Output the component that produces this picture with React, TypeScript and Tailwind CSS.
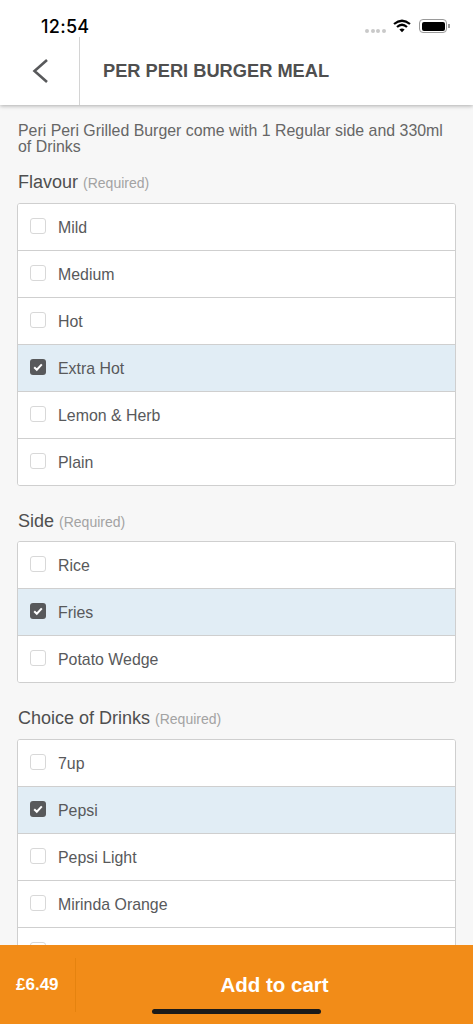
interface Option {
  label: string;
  checked?: boolean;
}

interface Group {
  title: string;
  spacing: string;
  heading: string;
  options: Option[];
}

const groups: Group[] = [
  {
    title: "Flavour",
    spacing: "mt-[14px]",
    heading: "h-[34px]",
    options: [
      { label: "Mild" },
      { label: "Medium" },
      { label: "Hot" },
      { label: "Extra Hot", checked: true },
      { label: "Lemon & Herb" },
      { label: "Plain" },
    ],
  },
  {
    title: "Side",
    spacing: "mt-[22px]",
    heading: "h-[33px]",
    options: [
      { label: "Rice" },
      { label: "Fries", checked: true },
      { label: "Potato Wedge" },
    ],
  },
  {
    title: "Choice of Drinks",
    spacing: "mt-[22px]",
    heading: "h-[34px]",
    options: [
      { label: "7up" },
      { label: "Pepsi", checked: true },
      { label: "Pepsi Light" },
      { label: "Mirinda Orange" },
      { label: "" },
    ],
  },
];

function Checkbox({ checked }: { checked?: boolean }) {
  if (checked) {
    return (
      <div className="w-4 h-4 mt-[-3px] rounded-[3px] bg-[#58595b] flex items-center justify-center shrink-0">
        <svg width="12" height="12" viewBox="0 0 12 12" fill="none">
          <path d="M2.2 6.2 L4.8 8.8 L9.8 3.4" stroke="#fff" strokeWidth="2" />
        </svg>
      </div>
    );
  }
  return <div className="w-4 h-4 mt-[-3px] rounded-[3px] bg-white border border-[#d8d8d8] shrink-0" />;
}

export default function App() {
  return (
    <div className="relative h-[1024px] overflow-hidden flex flex-col bg-[#f7f7f7] font-['Liberation_Sans',Arial,sans-serif]">
      {/* Header */}
      <div className="relative z-10 h-[105px] bg-white shrink-0 shadow-[0_1px_4px_rgba(0,0,0,0.3)]">
        <div className="h-[37px] relative">
          <span className="absolute left-[41px] top-[16px] text-[18px] leading-[21px] tracking-[0.3px] font-['Inter',sans-serif] font-medium text-black">
            12:54
          </span>
          <div className="absolute left-[365px] top-[29px] flex gap-[1.5px]">
            <span className="w-[4px] h-[4px] rounded-full bg-[#c9c9c9]" />
            <span className="w-[4px] h-[4px] rounded-full bg-[#c9c9c9]" />
            <span className="w-[4px] h-[4px] rounded-full bg-[#c9c9c9]" />
            <span className="w-[4px] h-[4px] rounded-full bg-[#c9c9c9]" />
          </div>
          <svg className="absolute left-[393px] top-[19px]" width="18" height="14" viewBox="0 0 18 14" fill="none">
            <path d="M1 5 Q9 -1.5 17 5" stroke="#000" strokeWidth="2.2" />
            <path d="M4 8 Q9 3.5 14 8" stroke="#000" strokeWidth="2.2" />
            <path d="M6.4 10.4 L9 13.2 L11.6 10.4 Q9 8.4 6.4 10.4 Z" fill="#000" />
          </svg>
          <div className="absolute left-[419px] top-[19px] w-[28px] h-[14px] rounded-[4px] border border-[#9a9a9a] p-[1.5px]">
            <div className="w-full h-full rounded-[2px] bg-black" />
          </div>
          <div className="absolute left-[448px] top-[24px] w-[1.5px] h-[4px] bg-[#9a9a9a]" />
        </div>
        <div className="h-[68px] flex items-stretch">
          <div className="w-[80px] border-r border-[#d4d4d4] flex items-center pl-[32px]">
            <svg width="18" height="26" viewBox="0 0 18 26" fill="none">
              <path d="M15 2 L2.5 13 L15 24" stroke="#58595b" strokeWidth="2.6" />
            </svg>
          </div>
          <div className="flex items-center pl-[23px] text-[18.25px] font-bold text-[#4f4f4f]">
            PER PERI BURGER MEAL
          </div>
        </div>
      </div>

      {/* Content */}
      <div className="flex-1 overflow-hidden px-[17px] pt-[18px]">
        <p className="pl-[1px] text-[15.9px] leading-[16px] text-[#666666]">
          Peri Peri Grilled Burger come with 1 Regular side and 330ml of Drinks
        </p>
        {groups.map((group) => (
          <div key={group.title} className={group.spacing}>
            <div className={`${group.heading} pl-[1px] flex items-baseline gap-[5px]`}>
              <span className="text-[18px] leading-[26px] text-[#4f4f4f]">{group.title}</span>
              <span className="text-[14px] text-[#a3a3a3]">(Required)</span>
            </div>
            <div className="border border-[#cfcfcf] rounded-[3px] bg-white overflow-hidden">
              {group.options.map((option, j) => (
                <div
                  key={j}
                  className={`flex items-center pl-[12px] gap-[12px] ${
                    j > 0 ? "h-[47px] border-t border-[#cfcfcf]" : "h-[46px]"
                  } ${option.checked ? "bg-[#e1edf5]" : "bg-white"}`}
                >
                  <Checkbox checked={option.checked} />
                  <span className="mt-[2px] text-[15.9px] text-[#58595b]">{option.label}</span>
                </div>
              ))}
            </div>
          </div>
        ))}
      </div>

      {/* Footer */}
      <div className="absolute left-0 right-0 bottom-0 h-[79px] bg-[#f28c18] flex text-white font-bold">
        <div className="w-[76px] h-[54px] mt-[13px] pl-[16px] flex items-center border-r border-[#e5830f] text-[17px]">
          £6.49
        </div>
        <div className="flex-1 h-[54px] mt-[13px] flex items-center justify-center text-[20.5px]">
          Add to cart
        </div>
        <div className="absolute left-[152px] top-[64px] w-[169px] h-[5px] rounded-full bg-[#1a1a1a]" />
      </div>
    </div>
  );
}
